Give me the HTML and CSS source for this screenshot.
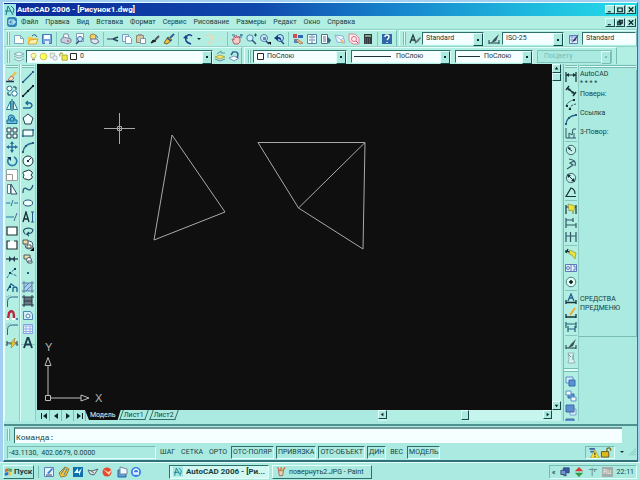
FILE: index.html
```html
<!DOCTYPE html>
<html lang="ru">
<head>
<meta charset="utf-8">
<title>AutoCAD 2006 - [Рисунок1.dwg]</title>
<link rel="stylesheet" href="styles.css">
</head>
<body>
<svg class="sprite" aria-hidden="true">
  <symbol id="app" viewBox="0 0 12 12"><path d="M0 0h12v12H0z" fill="#9fe6e4"/><path d="M2 11 4 2l5 9M1 7h6M7 2l3 3-1 4" fill="none" stroke="#167a84"/></symbol>
  <symbol id="doc" viewBox="0 0 12 12"><rect x="1" y="1" width="10" height="10" rx="3" fill="#2f83b8"/><path d="M3 4h5v4H3zM5 6h5" fill="none" stroke="#e4ffff"/></symbol>
  <symbol id="new" viewBox="0 0 12 12"><path d="M1.500 2.500h6l3 3v5h-9z" fill="#fff" stroke="#7da6c4"/><path d="M7.500 2.500v3h3" fill="none" stroke="#7da6c4"/></symbol>
  <symbol id="open" viewBox="0 0 12 12"><path d="M1 4h4l1 1h4v6H1z" fill="#f7c948"/><path d="m3 7 8-1-2 5H1z" fill="#fff1a8" stroke="#c48b26" stroke-width=".7"/><path d="M5 3q3-3 5 1" fill="none" stroke="#2c5a7a"/></symbol>
  <symbol id="save" viewBox="0 0 12 12"><path d="M1.500 1.500h9v9h-9z" fill="#7ba7de" stroke="#4b74b4"/><path d="M3 2h6v4H3z" fill="#f5ffff"/><path d="M4 8h4v3H4z" fill="#dceeff"/></symbol>
  <symbol id="print" viewBox="0 0 12 12"><path d="m3 5 1-4h4l1 4" fill="#fff" stroke="#7c8fac"/><path d="M1 6 4 4l7 2v3l-3 2-7-2z" fill="#c7cde0" stroke="#6b7493" stroke-width=".8"/><path d="M7 8h2" stroke="#c33"/></symbol>
  <symbol id="preview" viewBox="0 0 12 12"><path d="M2.500.500h7v8h-7z" fill="#fff" stroke="#839cbc"/><circle cx="6" cy="6" r="2.500" fill="#c7efff" stroke="#406aaa"/><path d="m5 8-3 3" stroke="#384c7a" stroke-width="1.500"/></symbol>
  <symbol id="publish" viewBox="0 0 12 12"><circle cx="5" cy="4" r="3" fill="#f4d16c" stroke="#a38142"/><path d="M3 6h6l2 3-4 2-4-2z" fill="#e3e6ef" stroke="#6e7591"/><path d="m8 2 2 3" stroke="#587bb4"/></symbol>
  <symbol id="cut" viewBox="0 0 12 12"><path d="M0 6h7" stroke="#577886" stroke-width="1.500"/><path d="m6 6 5-2M6 6l5 2" stroke="#27475e" stroke-width="1.500"/></symbol>
  <symbol id="copy" viewBox="0 0 12 12"><path d="M1.500 1.500h6v7h-6z" fill="#e9f5ff" stroke="#7b9cc4"/><path d="M4.500 3.500h4l2 2v5h-6z" fill="#fff" stroke="#7b9cc4"/></symbol>
  <symbol id="paste" viewBox="0 0 12 12"><path d="M1.500 2.500h7v7h-7z" fill="#d9c9a2" stroke="#928668"/><path d="M3 1h4v2H3z" fill="#99a"/><path d="M5.500 5.500h5v5h-5z" fill="#fff" stroke="#8494ae"/></symbol>
  <symbol id="brush" viewBox="0 0 12 12"><path d="m10 3-4 4" stroke="#556" stroke-width="2"/><path d="m2 10 2-3 3 1z" fill="#222" stroke="#222"/></symbol>
  <symbol id="brush2" viewBox="0 0 12 12"><path d="m11 1-4 4" stroke="#36609a" stroke-width="2"/><path d="m5 4 4 3-5 4-3-1z" fill="#f5bf36" stroke="#77621f"/><path d="m4 5 4 3" stroke="#1f59a1" stroke-width="1.500"/></symbol>
  <symbol id="undo" viewBox="0 0 12 12"><path d="M9 11Q2 9 4 4q3-4 6-1" fill="none" stroke="#17418e" stroke-width="1.600"/><path d="m1 5 3-3 2 4z" fill="#17418e"/></symbol>
  <symbol id="redo" viewBox="0 0 12 12"><path d="M3 11q7-2 5-7Q5 0 2 3" fill="none" stroke="#e3d9b9" stroke-width="1.600"/><path d="M11 5 8 2 6 6z" fill="#e8deb9"/></symbol>
  <symbol id="pan" viewBox="0 0 12 12"><path d="M3 11 1 6l2 1V3l2 2V2l2 3 1-2 1 3v3l-2 2z" fill="#f8c9c4" stroke="#ad6574"/><path d="M9 2h3M10 1v4M1 2h3" stroke="#2a6b9b"/></symbol>
  <symbol id="zoom" viewBox="0 0 12 12"><circle cx="5" cy="5" r="3.200" fill="#c4f0ff" stroke="#537ba7"/><path d="m7 7 4 4" stroke="#244c75" stroke-width="1.500"/><path d="M9 2h3M10.500.500v3" stroke="#244c75"/></symbol>
  <symbol id="zoomw" viewBox="0 0 12 12"><circle cx="5" cy="5" r="3.500" fill="#ccefff" stroke="#537ba7"/><path d="m7 8 3 3" stroke="#244c75" stroke-width="1.500"/><path d="M4 4h3v3H4z" fill="#6788ad"/><path d="M9 9h3v3z" fill="#000"/></symbol>
  <symbol id="zoomp" viewBox="0 0 12 12"><circle cx="7" cy="5" r="3.500" fill="#b9e4ff" stroke="#2f60a2"/><path d="m8 8 3 3" stroke="#244c75" stroke-width="1.500"/><path d="m1 5 4-3v2q4 0 3 4-1-2-3-2v2z" fill="#184080"/></symbol>
  <symbol id="props" viewBox="0 0 12 12"><path d="M1 1h4v4H1z" fill="#cf4e4f"/><path d="M6 2h5v3H6z" fill="#2f69b7"/><path d="M2 6h4v4H2z" fill="#5b82bd"/><path d="m5 6 6 4-3 1-4-4z" fill="#f0bd79" stroke="#9d6654" stroke-width=".7"/></symbol>
  <symbol id="dc" viewBox="0 0 12 12"><path d="M1.500 1.500h9v9h-9zM6 1v10" fill="#f6ffff" stroke="#5a81a7"/><path d="M3 4h2M3 7h2M7 4h2M7 7h2" stroke="#517297"/></symbol>
  <symbol id="palette" viewBox="0 0 12 12"><path d="M1.500 1.500h6v9h-6z" fill="#fff" stroke="#557291"/><path d="M3 4h3M3 6h3M3 8h3" stroke="#4a79a5"/><path d="m7 3 4 4-2 4-2-4z" fill="#37658a"/></symbol>
  <symbol id="sheet" viewBox="0 0 12 12"><path d="m1 2 8 1 2 7-8-1z" fill="#eef6ff" stroke="#8db4d2"/><path d="m1 2 6 5 3-3" fill="none" stroke="#a8bdd8"/><path d="m7 7 3 3" stroke="#edb878" stroke-width="2"/></symbol>
  <symbol id="markup" viewBox="0 0 12 12"><path d="M1 1h6l4 4v6H5L1 8z" fill="#ffe9ee" stroke="#d08c9c"/><circle cx="6" cy="6" r="2.500" fill="none" stroke="#dd6e84"/><path d="m8 8 2 2" stroke="#c38"/></symbol>
  <symbol id="calc" viewBox="0 0 12 12"><path d="M2 1h8v10H2z" fill="#343940"/><path d="M3 2h6v2H3z" fill="#79a486"/><path d="M3 6h6M3 8h6M3 10h6" stroke="#a46b6d" stroke-dasharray="1 1"/></symbol>
  <symbol id="help" viewBox="0 0 12 12"><path d="M1 1h10v10H1z" fill="#2f67a9"/><path d="M4 4q0-2 2-2t2 2q0 1-2 3M6 9v1" fill="none" stroke="#fff" stroke-width="1.400"/></symbol>
  <symbol id="tstyle" viewBox="0 0 12 12"><path d="m1 10 3-8 3 8M2 7h4" fill="none" stroke="#233c45" stroke-width="1.300"/><path d="m11 4-4 4-2 3 4-2 3-4z" fill="#68777a"/></symbol>
  <symbol id="dstyle" viewBox="0 0 12 12"><path d="M1 7v4M11 7v4M1 10h10" stroke="#233c45"/><path d="m11 1-5 5-3 4 5-2z" fill="#394f56"/></symbol>
  <symbol id="tabst" viewBox="0 0 12 12"><path d="M1.500 2.500h8v8h-8z" fill="#eaf2ff" stroke="#6176c2"/><path d="M2 4h7M4 3v7M2 7h7" stroke="#879be0"/><path d="m11 1-5 5-2 3 3-1z" fill="#2d355a"/></symbol>
  <symbol id="layers" viewBox="0 0 12 12"><path d="m1 4 5-2 5 2-5 2zM1 6l5 2 5-2M1 9l5 2 5-2" fill="#eaffff" stroke="#7e9dac" stroke-width=".8"/></symbol>
  <symbol id="layprev" viewBox="0 0 12 12"><path d="m1 7 5-2 5 2-5 2z" fill="#f4e45d" stroke="#9b9443" stroke-width=".7"/><path d="m1 9 5 2 5-2" fill="none" stroke="#638ca3"/><path d="m3 4 4-3v2h4" fill="none" stroke="#609a8f"/></symbol>
  <symbol id="layback" viewBox="0 0 12 12"><path d="m1 8 5-2 5 2-5 3z" fill="#f6ffff" stroke="#7d9aba"/><path d="M9 8q3-7-4-6L3 5" fill="none" stroke="#36609a" stroke-width="1.500"/></symbol>
  <symbol id="bulb" viewBox="0 0 12 12"><path d="M4 8Q1 4 4 2h4q3 2 0 6z" fill="#fcffac" stroke="#bcb74e"/><path d="M4 10h4" stroke="#8c8f70" stroke-width="2"/></symbol>
  <symbol id="sun" viewBox="0 0 12 12"><circle cx="6" cy="6" r="4.500" fill="#ffff55" stroke="#b9b944"/></symbol>
  <symbol id="vp" viewBox="0 0 12 12"><path d="M1.500 1.500h6v6h-6z" fill="#eaf1df" stroke="#abb3a4"/><circle cx="8" cy="8" r="3" fill="#eef" stroke="#a4abb3"/></symbol>
  <symbol id="lock" viewBox="0 0 12 12"><path d="M1 6V3q2-3 4 0" fill="none" stroke="#a6a12c" stroke-width="1.500"/><path d="M4 4h7v7H4z" fill="#eeee4a" stroke="#99962c"/></symbol>
  <symbol id="swatch" viewBox="0 0 12 12"><path d="M2 2h8v8H2z" fill="#fff" stroke="#222" stroke-width="1.300"/></symbol>

  <symbol id="erase" viewBox="0 0 12 12"><path d="m10 1-5 6" stroke="#e8c35c" stroke-width="2.500"/><path d="m5 5 3 2-3 3-3-1z" fill="#ffdfc9" stroke="#a84a3c" stroke-width=".7"/><path d="M0 10.500h8" stroke="#16395b" stroke-width="1.500"/></symbol>
  <symbol id="dup" viewBox="0 0 12 12"><g fill="#f4ffff" stroke="#2a6c9c"><circle cx="3.500" cy="3.500" r="2.500"/><circle cx="8.500" cy="8.500" r="2.700"/></g><path d="M7 2h3v3M2 7v3h3" fill="none" stroke="#17395a"/></symbol>
  <symbol id="mirror" viewBox="0 0 12 12"><path d="M4.500 2v8.500H.500zM7.500 2v8.500h4z" fill="#eaffff" stroke="#2a7799"/><path d="M6 0v12" stroke="#0d5577"/></symbol>
  <symbol id="offset" viewBox="0 0 12 12"><path d="M1 10.500h10V7H9q0-5-4-5T3 7H1zM4 8h4q0-4-2-4T4 8" fill="#71bddc" stroke="#146b9b"/></symbol>
  <symbol id="array" viewBox="0 0 12 12"><path d="M1 1h4v4H1zM7 1h4v4H7zM1 7h4v4H1zM7 7h4v4H7z" fill="#f4ffff" stroke="#263b4d"/></symbol>
  <symbol id="move" viewBox="0 0 12 12"><path d="M6 2v8M2 6h8" stroke="#266d9d" stroke-width="1.400"/><path d="m6 0 2 3H4zM6 12 4 9h4zM0 6l3-2v4zM12 6 9 8V4z" fill="#266d9d"/></symbol>
  <symbol id="rotate" viewBox="0 0 12 12"><path d="M3 3a4.500 4.500 0 1 0 5-1" fill="none" stroke="#2a77a8" stroke-width="1.600"/><path d="M1 2h4v4z" fill="#17395a"/></symbol>
  <symbol id="scale" viewBox="0 0 12 12"><path d="M.500.500h11v11H.500z" fill="#fff" stroke="#8fa8a8"/><path d="M.500 5.500h6v6h-6z" fill="#fff" stroke="#a19696"/></symbol>
  <symbol id="stretch" viewBox="0 0 12 12"><path d="M1.500 1.500h3v9h-3z" fill="#fff" stroke="#678"/><path d="m5 1 6 10H5z" fill="#effcfc" stroke="#355266"/></symbol>
  <symbol id="trim" viewBox="0 0 12 12"><path d="M0 6h4M8 6h4" stroke="#2a77a8"/><path d="m5 9 2-6" stroke="#456c8e"/><path d="M4 6h4" stroke="#80bcc4" stroke-dasharray="1 1"/></symbol>
  <symbol id="extend" viewBox="0 0 12 12"><path d="M0 6h8" stroke="#2a77a8"/><path d="m8 10 3-8" stroke="#456c8e"/></symbol>
  <symbol id="box" viewBox="0 0 12 12"><path d="M1 2h10v8H1z" fill="#fff" stroke="#1d3037" stroke-width="1.200"/></symbol>
  <symbol id="break" viewBox="0 0 12 12"><path d="M4 2H1v8h10V2H8" fill="#fff" stroke="#1d3037" stroke-width="1.200"/></symbol>
  <symbol id="join" viewBox="0 0 12 12"><path d="M0 6h12" stroke="#243f4d" stroke-width="1.300"/><path d="m3 3 3 3-3 3zM9 3 6 6l3 3z" fill="#243f4d"/></symbol>
  <symbol id="chamf" viewBox="0 0 12 12"><path d="m1 11 3-5 5-4M4 6l7 3" fill="none" stroke="#2a77a8" stroke-dasharray="3 1"/><path d="M3 5h2v2H3zM8 1h2v2H8z" fill="#17395a"/></symbol>
  <symbol id="chamf2" viewBox="0 0 12 12"><path d="m1 10 4-7 3 2M7 11V7q2-2 4 0v4" fill="none" stroke="#17648f" stroke-width="1.300"/><path d="M3 5h2v2H3z" fill="#17395a"/></symbol>
  <symbol id="fillet" viewBox="0 0 12 12"><path d="M1.500 12V7q0-5 5-5H12" fill="none" stroke="#23698e"/><path d="M1 6V1h5" fill="none" stroke="#7aa9b0" stroke-dasharray="1 1"/></symbol>
  <symbol id="magnet" viewBox="0 0 12 12"><path d="m2 10 1-6q2-3 4-1 1 1 1 7" fill="none" stroke="#ba263c" stroke-width="2.400"/><path d="M0 10h3M6 10h3" stroke="#fff" stroke-width="2"/><path d="M10 9h2v2h-2z" fill="#4a85b0"/></symbol>
  <symbol id="explode" viewBox="0 0 12 12"><path d="M1 4v5M11 4v5M1 6h10" stroke="#243f4d"/><path d="m5 11 1-5-2 1 5-6-1 5 3-1z" fill="#efc73e" stroke="#8e6f1c" stroke-width=".5"/></symbol>
  <symbol id="line" viewBox="0 0 12 12"><path d="m1 11 9-9" stroke="#23638d" stroke-width="1.300"/><path d="M0 10h2v2H0zM10 0h2v2h-2z" fill="#23638d"/></symbol>
  <symbol id="xline" viewBox="0 0 12 12"><path d="m1 11 10-10" stroke="#12252e" stroke-width="1.200"/><path d="M0 10h2v2H0zM10 0h2v2h-2zM5 5h2v2H5z" fill="#12252e"/></symbol>
  <symbol id="pline" viewBox="0 0 12 12"><path d="M1 9h7q4-3 0-5H4M6 2 4 4l2 2" fill="none" stroke="#1b6c98" stroke-width="1.400"/></symbol>
  <symbol id="poly" viewBox="0 0 12 12"><path d="m6 1 5 4-2 6H3L1 5z" fill="#efffff" stroke="#284050"/></symbol>
  <symbol id="rect" viewBox="0 0 12 12"><path d="M1 3h10v6H1z" fill="#efffff" stroke="#1f4152"/><path d="M0 8h2v2H0zM10 2h2v2h-2z" fill="#267bb0"/></symbol>
  <symbol id="arc" viewBox="0 0 12 12"><path d="M1 11q1-8 10-9" fill="none" stroke="#276992" stroke-width="1.300"/><path d="M0 10h2v2H0zM3 4h2v2H3zM10 1h2v2h-2z" fill="#285d7f"/></symbol>
  <symbol id="circle" viewBox="0 0 12 12"><circle cx="6" cy="6" r="5" fill="#efffff" stroke="#20313b"/><path d="m6 6 3-3" stroke="#20313b"/><path d="M5 5h2v2H5z" fill="#20313b"/></symbol>
  <symbol id="cloud" viewBox="0 0 12 12"><path d="M4 2q3-2 5 0 3 2 0 4 3 2 0 4-3 2-5 0-4 0-2-4-3-3 2-4z" fill="#f4ffff" stroke="#20313b"/></symbol>
  <symbol id="spline" viewBox="0 0 12 12"><path d="M1 10Q1 3 5 6t6-4" fill="none" stroke="#265779" stroke-width="1.200"/></symbol>
  <symbol id="ellipse" viewBox="0 0 12 12"><ellipse cx="6" cy="6" rx="4.500" ry="3" fill="#efffff" stroke="#265779"/></symbol>
  <symbol id="earc" viewBox="0 0 12 12"><path d="M3 9Q-1 4 6 3q8 1 3 5L5 9l2-2M5 9l2 2" fill="none" stroke="#20516c" stroke-width="1.200"/></symbol>
  <symbol id="ai" viewBox="0 0 12 12"><path d="M1 11 4 1l3 10M2 8h4" fill="none" stroke="#172c35" stroke-width="1.300"/><path d="M9 1h3M9 11h3M10.500 1v10" stroke="#235c88"/></symbol>
  <symbol id="block" viewBox="0 0 12 12"><circle cx="7" cy="6" r="4" fill="#effaff" stroke="#466272"/><path d="M1 1h5v4H1z" fill="#f4dda0" stroke="#4b5b62"/><path d="M5 6h4v3H5z" fill="#ffd" stroke="#4b5b62"/><path d="M12 8v4H8z"/></symbol>
  <symbol id="block2" viewBox="0 0 12 12"><path d="M2 2h6v4H2z" fill="#f4dda0" stroke="#4b5b62"/><circle cx="7" cy="7" r="2.500" fill="#effaff" stroke="#466272"/><path d="M6 8h4v2H6z" fill="#fff" stroke="#4b5b62"/></symbol>
  <symbol id="point" viewBox="0 0 12 12"><path d="M5 5h2v2H5z" fill="#245f87"/></symbol>
  <symbol id="hatch" viewBox="0 0 12 12"><path d="M2 2h8v8H2z" fill="#a9cdec"/><path d="M0 2h12M2 0v12M10 0v12M0 10h12M2 7l5-5M4 10l6-6" fill="none" stroke="#5481a4"/></symbol>
  <symbol id="grad" viewBox="0 0 12 12"><path d="M2 2h8v8H2z" fill="#6b7680"/><path d="M0 2h12M2 0v12M10 0v12M0 10h12M2 6h8" fill="none" stroke="#263944"/></symbol>
  <symbol id="region" viewBox="0 0 12 12"><path d="M1.500 2.500h7l2 3v5h-9z" fill="#d3efff" stroke="#4c86ae"/><circle cx="6" cy="7" r="2" fill="#fff" stroke="#4c86ae"/></symbol>
  <symbol id="table" viewBox="0 0 12 12"><path d="M1.500 1.500h9v9h-9z" fill="#edf2ff" stroke="#7f9fdf"/><path d="M1 3h10M1 6h10M1 8.500h10M4 3v8M8 3v8" stroke="#94afe8"/></symbol>
  <symbol id="bigA" viewBox="0 0 12 12"><path d="M2 11 5.500 1h1L10 11M3 7.500h6" fill="none" stroke="#1d3d50" stroke-width="1.900"/></symbol>

  <symbol id="dlin" viewBox="0 0 12 12"><path d="M1 1v10M11 1v10M1 4h10" fill="none" stroke="#17333b" stroke-width="1.200"/><path d="m1 4 3-2v4zM11 4 8 2v4z" fill="#17333b"/></symbol>
  <symbol id="dali" viewBox="0 0 12 12"><path d="m2 3 8 6M1 5l3-4M8 11l3-4" stroke="#17333b" stroke-width="1.400"/><path d="m2 3 4 1-2 2zM10 9 6 8l2-2z" fill="#17333b"/></symbol>
  <symbol id="darc" viewBox="0 0 12 12"><path d="M1 7q2-5 8-6M4 11q1-5 7-6" fill="none" stroke="#315766" stroke-dasharray="3 1"/><path d="M1 6h2v2H1zM8 0h2v2H8zM4 9h2v2H4z" fill="#17333b"/></symbol>
  <symbol id="dord" viewBox="0 0 12 12"><path d="M1 1v10h10M4 11V6l3 2 1-6h3M9 6v5" fill="none" stroke="#315766"/></symbol>
  <symbol id="drad" viewBox="0 0 12 12"><circle cx="6" cy="6" r="4.700" fill="#c3f0e9" stroke="#426872"/><path d="m3 4 4 3" stroke="#17333b"/><path d="m3 3 3 1-2 2z" fill="#17333b"/></symbol>
  <symbol id="djog" viewBox="0 0 12 12"><path d="M4 1q8 1 6 7M9 3 5 5l3 2-6 4" fill="none" stroke="#315766" stroke-width="1.200"/></symbol>
  <symbol id="ddia" viewBox="0 0 12 12"><circle cx="6" cy="6" r="4.700" fill="#c3f0e9" stroke="#426872"/><path d="m3 3 6 6" stroke="#17333b"/><path d="m2 2 4 1-3 3zM10 10 6 9l3-3z" fill="#17333b"/></symbol>
  <symbol id="dang" viewBox="0 0 12 12"><path d="M11 10.500H1L6 2q4 1 4 6" fill="none" stroke="#17333b" stroke-width="1.200"/></symbol>
  <symbol id="qdim" viewBox="0 0 12 12"><path d="M1 2v9M11 2v9M1 4h10" stroke="#17333b" stroke-width="1.200"/><path d="m3 1 7 2-2 8-1-4-3 1z" fill="#efe436" stroke="#79853b" stroke-width=".6"/></symbol>
  <symbol id="dbase" viewBox="0 0 12 12"><path d="M1 1v10M8 1v4M11 6v5M1 3h7M1 8h10" stroke="#315766" stroke-width="1.200"/></symbol>
  <symbol id="dcont" viewBox="0 0 12 12"><path d="M1 1v10M5.500 1v10M11 1v10M1 5h10" stroke="#315766" stroke-width="1.200"/></symbol>
  <symbol id="lead" viewBox="0 0 12 12"><path d="m0 3 5 1M1 5l2-4" stroke="#17333b" stroke-width="1.500"/><path d="m5 2 6 3-1 6-3-4-3-1z" fill="#efe436" stroke="#79853b" stroke-width=".6"/></symbol>
  <symbol id="tol" viewBox="0 0 12 12"><path d="M.500 2.500h11v7H.500zM6 2v8" fill="#e4f2ff" stroke="#5c79b8"/><circle cx="3" cy="6" r="1.500" fill="none" stroke="#5c79b8"/><path d="M8 4h2v4H8" fill="none" stroke="#5c79b8"/></symbol>
  <symbol id="cmark" viewBox="0 0 12 12"><circle cx="6" cy="6" r="4.800" fill="#dafff7" stroke="#527d7e"/><path d="M6 4v4M4 6h4" stroke="#111" stroke-width="1.500"/></symbol>
  <symbol id="dimA" viewBox="0 0 12 12"><path d="M1 7v4M11 7v4M1 9.500h10" stroke="#17333b" stroke-width="1.300"/><path d="m3 8 3-7 3 7M4 5h4" fill="none" stroke="#24618f" stroke-width="1.300"/></symbol>
  <symbol id="dimE" viewBox="0 0 12 12"><path d="M1 7v4M11 7v4M1 10h10" stroke="#17333b" stroke-width="1.300"/><path d="m10 1-5 7" stroke="#edab37" stroke-width="2"/></symbol>
  <symbol id="dimU" viewBox="0 0 12 12"><path d="M1 1v6M11 1v6M1 3h10M3 5v6M10 5v6M3 8h7" stroke="#236079" stroke-width="1.200"/></symbol>
  <symbol id="fade" viewBox="0 0 12 12"><path d="M3 1h6L8 6l2 5H3l1-5z" fill="#d8f2ef" stroke="#96b3b8"/><path d="m3 2 3 3M8 3v5" stroke="#6f9aa5"/></symbol>
  <symbol id="ord1" viewBox="0 0 12 12"><path d="M1 1h7v6H1z" fill="#d9edff" stroke="#5c8fc4"/><path d="M4 4h6v6H4z" fill="#5a94d0" stroke="#386aa8"/></symbol>
  <symbol id="ord2" viewBox="0 0 12 12"><path d="M3 4h6v4H3z" fill="#5a94d0" stroke="#386aa8"/><path d="M1 1h5v4H1zM6 7h5v4H6z" fill="#f3faff" stroke="#5c8fc4"/></symbol>
  <symbol id="ord3" viewBox="0 0 12 12"><path d="M5 5h6v6H5z" fill="#d9edff" stroke="#7da4cf"/><path d="M1 1h8v7H1z" fill="#5e8fd0" stroke="#3f6aa8"/></symbol>

  <symbol id="flag" viewBox="0 0 12 12"><path d="m2 2 4-1v4L1 6z" fill="#e35b38"/><path d="m6 1 5 1-1 4-4-1z" fill="#59aa48"/><path d="m1 7 5-1v4l-5 1z" fill="#356bd0"/><path d="m6 6 4 1-1 4-3-1z" fill="#f1c93a"/></symbol>
  <symbol id="ql1" viewBox="0 0 12 12"><path d="M1.500 1.500h9v9h-9z" fill="#e3f3ff" stroke="#5b83b7"/><path d="m4 7 5-5 1 1-4 5z" fill="#3f7ec3"/><path d="M3 9h6" stroke="#446"/></symbol>
  <symbol id="ql2" viewBox="0 0 12 12"><path d="m7 1 4 2-3 7-5 1-2-4z" fill="#f2c641" stroke="#a17a2c"/><path d="m7 2-4 6M9 3 6 9" stroke="#3c87a1"/></symbol>
  <symbol id="ql3" viewBox="0 0 12 12"><path d="M1 1h10v10H1z" fill="#126fae"/><path d="m2 7 4-5v4l4-4-3 8V7z" fill="#e3ffff"/></symbol>
  <symbol id="ql4" viewBox="0 0 12 12"><path d="m1 4 4 1 6-2-4 6-4-1z" fill="#d8e6e7" stroke="#526d75"/><path d="m4 5 3 2" stroke="#a55"/></symbol>
  <symbol id="ql5" viewBox="0 0 12 12"><circle cx="6" cy="6" r="4.500" fill="#e74830"/><path d="m2 3 5 3 4-2-3 5z" fill="#ffd9ae"/></symbol>
  <symbol id="ql6" viewBox="0 0 12 12"><path d="M2 4h8v7H2z" fill="#5ba0db" stroke="#28659b"/><path d="m4 1 7 2v5H4z" fill="#eefaff" stroke="#789"/></symbol>
  <symbol id="ql7" viewBox="0 0 12 12"><circle cx="6" cy="6" r="5" fill="#377de2"/><path d="M9 8H4q-2-4 2-5 4 1 2 4H4" fill="none" stroke="#e8f5ff" stroke-width="1.300"/></symbol>
  <symbol id="paint" viewBox="0 0 12 12"><path d="M3 5h6l-1 6H4z" fill="#edd1a9" stroke="#8f6757"/><path d="M4 5 2 1M6 5V1M8 5l3-4" stroke="#d65d3b" stroke-width="1.400"/><path d="M7 5 9 1" stroke="#dfc53e"/></symbol>
  <symbol id="net" viewBox="0 0 12 12"><path d="M4 1h7v6H4z" fill="#3b5ba8" stroke="#29446f"/><path d="M1 4h6v5H1z" fill="#7394d6" stroke="#37456b"/><path d="M4 9h4v2H4z" fill="#567"/></symbol>
  <symbol id="updown" viewBox="0 0 12 12"><path d="m6 0 5 5H1z" fill="#d63c31"/><path d="m6 12 5-5H1z" fill="#2c9b42"/></symbol>
  <symbol id="plug" viewBox="0 0 12 12"><path d="M1 3h10M5 1v10M8 3v3" stroke="#699398" stroke-width="1.200"/></symbol>
  <symbol id="warn" viewBox="0 0 12 12"><path d="M1 2h6M2 5h5" stroke="#3d65a8" stroke-width="2"/><path d="m7 3 5 9H2z" fill="#f6df40" stroke="#9b8a2c" stroke-width=".6"/><path d="M7 6v3M7 10v1" stroke="#111"/></symbol>
  <symbol id="tlock" viewBox="0 0 12 12"><path d="M7 5V2q2-2 4 0v2" fill="none" stroke="#76661b" stroke-width="1.400"/><path d="M1 5h8v6H1z" fill="#dfb91c" stroke="#60531a"/></symbol>
</svg>

<div class="window">
  <header class="titlebar">
    <svg class="icon"><use href="#app"/></svg>
    <h1 class="title">AutoCAD 2006 - [Рисунок1.dwg]</h1>
    <div class="winbtns">
      <button aria-label="Свернуть"><svg viewBox="0 0 8 8"><path d="M1 7h4"/></svg></button><button aria-label="Развернуть"><svg viewBox="0 0 8 8"><path d="M1 2h6v5H1z"/></svg></button><button aria-label="Закрыть"><svg viewBox="0 0 8 8"><path d="m1 1 6 6M7 1 1 7"/></svg></button>
    </div>
  </header>

  <nav class="menubar">
    <svg class="icon"><use href="#doc"/></svg>
    <div class="menus">
      <button>Файл</button><button>Правка</button><button>Вид</button><button>Вставка</button><button>Формат</button><button>Сервис</button><button>Рисование</button><button>Размеры</button><button>Редакт</button><button>Окно</button><button>Справка</button>
    </div>
    <div class="winbtns">
      <button aria-label="Свернуть рисунок"><svg viewBox="0 0 8 8"><path d="M1 7h4"/></svg></button><button aria-label="Восстановить рисунок"><svg viewBox="0 0 8 8"><path d="M3 1h4v4H3zM1 3h4v4H1z"/></svg></button><button aria-label="Закрыть рисунок"><svg viewBox="0 0 8 8"><path d="m1 1 6 6M7 1 1 7"/></svg></button>
    </div>
  </nav>

  <div class="toolrow">
    <div class="toolbar">
      <i class="grip"></i>
      <button class="tool" aria-label="Создать"><svg><use href="#new"/></svg></button>
      <button class="tool" aria-label="Открыть"><svg><use href="#open"/></svg></button>
      <button class="tool" aria-label="Сохранить"><svg><use href="#save"/></svg></button>
      <i class="sep"></i>
      <button class="tool" aria-label="Печать"><svg><use href="#print"/></svg></button>
      <button class="tool" aria-label="Просмотр"><svg><use href="#preview"/></svg></button>
      <button class="tool" aria-label="Публикация"><svg><use href="#publish"/></svg></button>
      <i class="sep"></i>
      <button class="tool" aria-label="Вырезать"><svg><use href="#cut"/></svg></button>
      <button class="tool" aria-label="Копировать"><svg><use href="#copy"/></svg></button>
      <button class="tool" aria-label="Вставить"><svg><use href="#paste"/></svg></button>
      <button class="tool" aria-label="Копирование свойств"><svg><use href="#brush"/></svg></button>
      <button class="tool" aria-label="Редактор блоков"><svg><use href="#brush2"/></svg></button>
      <i class="sep"></i>
      <button class="tool" aria-label="Отменить"><svg><use href="#undo"/></svg></button>
      <button class="more" aria-label="Список отмены"></button>
      <button class="tool" aria-label="Повторить"><svg><use href="#redo"/></svg></button>
      <button class="more pale" aria-label="Список повтора"></button>
      <i class="sep"></i>
      <button class="tool" aria-label="Панорамирование"><svg><use href="#pan"/></svg></button>
      <button class="tool" aria-label="Зумирование"><svg><use href="#zoom"/></svg></button>
      <button class="tool" aria-label="Рамка"><svg><use href="#zoomw"/></svg></button>
      <button class="tool" aria-label="Предыдущий вид"><svg><use href="#zoomp"/></svg></button>
      <i class="sep"></i>
      <button class="tool" aria-label="Свойства"><svg><use href="#props"/></svg></button>
      <button class="tool" aria-label="Центр управления"><svg><use href="#dc"/></svg></button>
      <button class="tool" aria-label="Палитры"><svg><use href="#palette"/></svg></button>
      <button class="tool" aria-label="Подшивки"><svg><use href="#sheet"/></svg></button>
      <button class="tool" aria-label="Пометки"><svg><use href="#markup"/></svg></button>
      <button class="tool" aria-label="Калькулятор"><svg><use href="#calc"/></svg></button>
      <i class="sep"></i>
      <button class="tool" aria-label="Справка"><svg><use href="#help"/></svg></button>
    </div>
    <div class="toolbar grow">
      <i class="grip"></i>
      <button class="tool" aria-label="Текстовые стили"><svg><use href="#tstyle"/></svg></button>
      <div class="combo style"><select aria-label="Текстовый стиль"><option>Standard</option></select></div>
      <button class="tool wide" aria-label="Размерные стили"><svg><use href="#dstyle"/></svg></button>
      <div class="combo style"><select aria-label="Размерный стиль"><option>ISO-25</option></select></div>
      <button class="tool wide" aria-label="Стили таблиц"><svg><use href="#tabst"/></svg></button>
      <div class="combo rest"><select aria-label="Стиль таблиц"><option>Standard</option></select></div>
    </div>
  </div>

  <div class="toolrow">
    <div class="toolbar">
      <i class="grip"></i>
      <button class="tool" aria-label="Диспетчер слоев"><svg><use href="#layers"/></svg></button>
      <div class="combo layer">
        <select aria-label="Слой"><option>0</option></select>
        <span class="deco"><svg><use href="#bulb"/></svg><svg><use href="#sun"/></svg><svg><use href="#vp"/></svg><svg><use href="#lock"/></svg><svg><use href="#swatch"/></svg></span>
      </div>
      <button class="tool" aria-label="Сделать слой текущим"><svg><use href="#layprev"/></svg></button>
      <button class="tool" aria-label="Предыдущее состояние слоев"><svg><use href="#layback"/></svg></button>
    </div>
    <div class="toolbar props">
      <i class="grip"></i>
      <div class="combo color"><select aria-label="Цвет"><option>ПоСлою</option></select><span class="deco"><svg><use href="#swatch"/></svg></span></div>
      <div class="combo ltype"><select aria-label="Тип линии"><option>ПоСлою</option></select><span class="deco stroke"></span></div>
      <div class="combo weight"><select aria-label="Вес линии"><option>ПоСлою</option></select><span class="deco stroke"></span></div>
      <div class="combo plot off"><select aria-label="Стиль печати" disabled><option>ПоЦвету</option></select></div>
    </div>
  </div>

  <main class="work">
    <div class="column">
      <i class="hgrip"></i>
      <div class="stack">
        <button class="tool" aria-label="Стереть"><svg><use href="#erase"/></svg></button>
        <button class="tool" aria-label="Копировать объекты"><svg><use href="#dup"/></svg></button>
        <button class="tool" aria-label="Зеркало"><svg><use href="#mirror"/></svg></button>
        <button class="tool" aria-label="Подобие"><svg><use href="#offset"/></svg></button>
        <button class="tool" aria-label="Массив"><svg><use href="#array"/></svg></button>
        <button class="tool" aria-label="Перенести"><svg><use href="#move"/></svg></button>
        <button class="tool" aria-label="Повернуть"><svg><use href="#rotate"/></svg></button>
        <button class="tool" aria-label="Масштаб"><svg><use href="#scale"/></svg></button>
        <button class="tool" aria-label="Растянуть"><svg><use href="#stretch"/></svg></button>
        <button class="tool" aria-label="Обрезать"><svg><use href="#trim"/></svg></button>
        <button class="tool" aria-label="Удлинить"><svg><use href="#extend"/></svg></button>
        <button class="tool" aria-label="Разорвать в точке"><svg><use href="#box"/></svg></button>
        <button class="tool" aria-label="Разорвать"><svg><use href="#break"/></svg></button>
        <button class="tool" aria-label="Соединить"><svg><use href="#join"/></svg></button>
        <button class="tool" aria-label="Правка полилинии"><svg><use href="#chamf"/></svg></button>
        <button class="tool" aria-label="Правка сплайна"><svg><use href="#chamf2"/></svg></button>
        <button class="tool" aria-label="Фаска"><svg><use href="#fillet"/></svg></button>
        <button class="tool" aria-label="Привязка"><svg><use href="#magnet"/></svg></button>
        <button class="tool" aria-label="Сопряжение"><svg><use href="#fillet"/></svg></button>
        <button class="tool" aria-label="Расчленить"><svg><use href="#explode"/></svg></button>
      </div>
    </div>
    <div class="column">
      <i class="hgrip"></i>
      <div class="stack">
        <button class="tool" aria-label="Отрезок"><svg><use href="#line"/></svg></button>
        <button class="tool" aria-label="Прямая"><svg><use href="#xline"/></svg></button>
        <button class="tool" aria-label="Полилиния"><svg><use href="#pline"/></svg></button>
        <button class="tool" aria-label="Многоугольник"><svg><use href="#poly"/></svg></button>
        <button class="tool" aria-label="Прямоугольник"><svg><use href="#rect"/></svg></button>
        <button class="tool" aria-label="Дуга"><svg><use href="#arc"/></svg></button>
        <button class="tool" aria-label="Круг"><svg><use href="#circle"/></svg></button>
        <button class="tool" aria-label="Облако"><svg><use href="#cloud"/></svg></button>
        <button class="tool" aria-label="Сплайн"><svg><use href="#spline"/></svg></button>
        <button class="tool" aria-label="Эллипс"><svg><use href="#ellipse"/></svg></button>
        <button class="tool" aria-label="Текст"><svg><use href="#ai"/></svg></button>
        <button class="tool" aria-label="Эллиптическая дуга"><svg><use href="#earc"/></svg></button>
        <button class="tool" aria-label="Вставить блок"><svg><use href="#block"/></svg></button>
        <button class="tool" aria-label="Создать блок"><svg><use href="#block2"/></svg></button>
        <button class="tool" aria-label="Точка"><svg><use href="#point"/></svg></button>
        <button class="tool" aria-label="Штриховка"><svg><use href="#hatch"/></svg></button>
        <button class="tool" aria-label="Градиент"><svg><use href="#grad"/></svg></button>
        <button class="tool" aria-label="Область"><svg><use href="#region"/></svg></button>
        <button class="tool" aria-label="Таблица"><svg><use href="#table"/></svg></button>
        <button class="tool" aria-label="Многострочный текст"><svg><use href="#bigA"/></svg></button>
      </div>
    </div>

    <section class="drawing">
      <svg class="model" role="img" aria-label="Рисунок">
        <path class="cross" d="M67 64.500h31M82.500 49v31M80.500 62.500h4v4h-4z"/>
        <path class="shape" d="m135 71 53 77-71 28zM221 78.500h107L261.500 144zM261.500 144 326 185l2-106.500"/>
        <path class="ucs" d="M8.500 331.500h5v5h-5zM11 331v-30M11 293.500l-3 8h6zM14 334h30M52 334l-8-3v6z"/>
        <text class="axis" x="8" y="287">Y</text>
        <text class="axis" x="58" y="338">X</text>
      </svg>
      <div class="vscroll">
        <button aria-label="Вверх"><svg viewBox="0 0 8 8"><path d="m4 2 2 3H2z"/></svg></button>
        <i class="thumb"></i>
        <span class="track"></span>
        <button aria-label="Вниз"><svg viewBox="0 0 8 8"><path d="M4 6 2 3h4z"/></svg></button>
      </div>
      <div class="tabs">
        <div class="tabnav">
          <button aria-label="Первый"><svg viewBox="0 0 8 8"><path d="M1 1h1v6H1zM7 1v6L3 4z"/></svg></button><button aria-label="Назад"><svg viewBox="0 0 8 8"><path d="M6 1v6L2 4z"/></svg></button><button aria-label="Вперед"><svg viewBox="0 0 8 8"><path d="M2 1v6l4-3z"/></svg></button><button aria-label="Последний"><svg viewBox="0 0 8 8"><path d="M6 1h1v6H6zM1 1v6l4-3z"/></svg></button>
        </div>
        <button class="tab current">Модель</button>
        <button class="tab">Лист1</button>
        <button class="tab">Лист2</button>
        <div class="hscroll">
          <button aria-label="Влево"><svg viewBox="0 0 8 8"><path d="M2 4l3-2v4z"/></svg></button>
          <span class="before"></span><i class="thumb"></i><span class="after"></span>
          <button aria-label="Вправо"><svg viewBox="0 0 8 8"><path d="M6 4 3 6V2z"/></svg></button>
        </div>
      </div>
    </section>

    <div class="column dims">
      <i class="hgrip"></i>
      <button class="tool" aria-label="Линейный"><svg><use href="#dlin"/></svg></button>
      <button class="tool" aria-label="Параллельный"><svg><use href="#dali"/></svg></button>
      <button class="tool" aria-label="Длина дуги"><svg><use href="#darc"/></svg></button>
      <button class="tool" aria-label="Дуговой"><svg><use href="#arc"/></svg></button>
      <button class="tool" aria-label="Ординатный"><svg><use href="#dord"/></svg></button>
      <i class="rule"></i>
      <button class="tool" aria-label="Радиус"><svg><use href="#drad"/></svg></button>
      <button class="tool" aria-label="С изломом"><svg><use href="#djog"/></svg></button>
      <button class="tool" aria-label="Диаметр"><svg><use href="#ddia"/></svg></button>
      <button class="tool" aria-label="Угловой"><svg><use href="#dang"/></svg></button>
      <i class="rule"></i>
      <button class="tool" aria-label="Быстрый размер"><svg><use href="#qdim"/></svg></button>
      <button class="tool" aria-label="Базовый"><svg><use href="#dbase"/></svg></button>
      <button class="tool" aria-label="Размерная цепь"><svg><use href="#dcont"/></svg></button>
      <i class="rule"></i>
      <button class="tool" aria-label="Быстрая выноска"><svg><use href="#lead"/></svg></button>
      <button class="tool" aria-label="Допуск"><svg><use href="#tol"/></svg></button>
      <button class="tool" aria-label="Маркер центра"><svg><use href="#cmark"/></svg></button>
      <i class="rule"></i>
      <button class="tool" aria-label="Редактировать размер"><svg><use href="#dimA"/></svg></button>
      <button class="tool" aria-label="Редактировать текст"><svg><use href="#dimE"/></svg></button>
      <button class="tool" aria-label="Обновить размер"><svg><use href="#dimU"/></svg></button>
      <i class="rule"></i>
      <button class="tool" aria-label="Стили размеров"><svg><use href="#dstyle"/></svg></button>
      <button class="tool" aria-label="Сравнить"><svg><use href="#fade"/></svg></button>
      <i class="hgrip order"></i>
      <button class="tool" aria-label="На передний план"><svg><use href="#ord1"/></svg></button>
      <button class="tool" aria-label="На задний план"><svg><use href="#ord2"/></svg></button>
      <button class="tool" aria-label="Перед объектом"><svg><use href="#ord3"/></svg></button>
      <button class="tool" aria-label="За объектом"><svg><use href="#ord3"/></svg></button>
    </div>

    <aside class="side">
      <i class="hgrip"></i>
      <div class="screenmenu">
        <button>AutoCAD</button>
        <button>* * * *</button>
        <button class="spaced">Поверн:</button>
        <button class="spaced">Ссылка</button>
        <button class="spaced">3-Повор:</button>
        <button class="push">СРЕДСТВА</button>
        <button>ПРЕДМЕНЮ</button>
      </div>
    </aside>
  </main>

  <div class="command">
    <i class="grip"></i>
    <label class="cmdline"><span>Команда:</span><input type="text" aria-label="Командная строка"></label>
  </div>

  <footer class="status">
    <output class="coords">-43.1130,&nbsp; 402.0679, 0.0000</output>
    <button>ШАГ</button><button>СЕТКА</button><button>ОРТО</button><button class="on">ОТС-ПОЛЯР</button><button class="on">ПРИВЯЗКА</button><button class="on">ОТС-ОБЪЕКТ</button><button class="on">ДИН</button><button>ВЕС</button><button class="on">МОДЕЛЬ</button>
    <div class="tray"><svg><use href="#warn"/></svg><svg><use href="#tlock"/></svg></div>
    <button class="traymenu" aria-label="Меню строки состояния"></button>
    <svg class="sizer" viewBox="0 0 8 8"><path d="M8 0 0 8M8 3 3 8M8 6 6 8"/></svg>
  </footer>
</div>

<div class="taskbar">
  <button class="start"><svg><use href="#flag"/></svg>Пуск</button>
  <div class="quick">
    <button aria-label="Рабочий стол"><svg><use href="#ql1"/></svg></button>
    <button aria-label="Проводник"><svg><use href="#ql2"/></svg></button>
    <button aria-label="Плеер"><svg><use href="#ql3"/></svg></button>
    <button aria-label="Почта"><svg><use href="#ql4"/></svg></button>
    <button aria-label="Загрузки"><svg><use href="#ql5"/></svg></button>
    <button aria-label="Документы"><svg><use href="#ql6"/></svg></button>
    <button aria-label="Интернет"><svg><use href="#ql7"/></svg></button>
  </div>
  <button class="task active"><svg><use href="#app"/></svg>AutoCAD 2006 - [Ри...</button>
  <button class="task"><svg><use href="#paint"/></svg>повернуть2.JPG - Paint</button>
  <div class="systray">
    <span>«</span>
    <svg><use href="#net"/></svg><svg><use href="#updown"/></svg><svg><use href="#plug"/></svg>
    <span class="lang">Ru</span>
    <time>22:11</time>
  </div>
</div>
</body>
</html>
```
FILE: styles.css
```css
:root {
  --face: #aaeae0;
  --bar: #b2eee2;
  --light: #e2fffa;
  --mid: #78bdb4;
  --dark: #2e706b;
  --ink: #173f40;
  --field: #f6ffff;
}

* { box-sizing: border-box; }

body {
  margin: 0;
  height: 100vh;
  display: flex;
  flex-direction: column;
  overflow: hidden;
  background: #a2cef2;
  color: var(--ink);
  font: 7px/10px Roboto, "Liberation Sans", sans-serif;
}

button, select, input {
  margin: 0;
  padding: 0;
  border: 0;
  border-radius: 0;
  background: none;
  color: inherit;
  font: inherit;
}

button { flex: none; white-space: nowrap; }
svg { display: block; flex: none; width: 12px; height: 12px; }
i { display: block; flex: none; }
.sprite { position: absolute; width: 0; height: 0; }

.window {
  flex: 1;
  min-height: 0;
  display: flex;
  flex-direction: column;
  margin: 2px 2px 0 3px;
  border: 1px solid var(--light);
  border-right: 1px solid #3b758b;
  border-bottom: 2px solid #34707c;
  background: var(--face);
}
.window > * { flex: none; }

.titlebar {
  display: flex;
  align-items: center;
  height: 13px;
  background: linear-gradient(90deg, #0b2a9a, #0f48ac 40%, #1785cd 62%, #1fc4e2 88%, #27dbe7);
  color: #fff;
}
.titlebar .icon { margin-right: 1px; }
.title { flex: 1; margin: 0; font: bold 8px/13px Roboto, "Liberation Sans", sans-serif; }

.winbtns { display: flex; padding-right: 1px; }
.winbtns button, .vscroll button, .hscroll button {
  background: var(--face);
  border: 1px solid var(--light);
  border-right-color: #164a4a;
  border-bottom-color: #164a4a;
}
.winbtns button { width: 10px; height: 9px; padding: 0 1px; }
.winbtns button:last-child { margin-left: 1px; }
.winbtns svg { width: 6px; height: 7px; fill: none; stroke: #071d1f; stroke-width: 1.5; }

.menubar { display: flex; align-items: center; height: 12px; background: var(--bar); }
.menubar .icon { margin: 0 3px 0 2px; }
.menus { flex: 1; display: flex; gap: 7px; }

.toolrow { display: flex; height: 17px; margin-top: 1px; padding-left: 2px; background: var(--bar); border-top: 1px solid #94d3c9; }
.toolrow + .toolrow { margin-top: 0; height: 18px; }
.toolbar { display: flex; align-items: center; border-right: 1px solid var(--mid); border-top: 1px solid var(--light); }
.toolbar + .toolbar { border-left: 1px solid var(--light); margin-left: 2px; padding-left: 2px; }
.toolrow:nth-of-type(1) .toolbar:first-child { padding-right: 2px; }
.grow { flex: 1; min-width: 0; }
.grip { width: 3px; height: 13px; margin: 0 2px 0 1px; border: 1px solid var(--mid); border-top: 0; border-bottom: 0; background: var(--light); }
.sep { width: 1px; height: 14px; margin: 0 2px; background: #83c7bd; }
.tool { width: 14px; height: 14px; padding: 1px; }
.tool.wide { width: 18px; padding-left: 4px; }
.more { width: 8px; height: 12px; }
.more::before, .traymenu::before { content: ""; display: block; width: 0; margin: 0 auto; border: 2px solid transparent; border-top-color: #142d30; border-bottom: 0; }
.more.pale::before { border-top-color: #d9e2c4; }

.combo { position: relative; flex: none; height: 13px; border: 1px solid var(--dark); border-right-color: var(--light); border-bottom-color: var(--light); background: var(--field); }
.combo select { display: block; width: 100%; height: 11px; padding: 0 10px 0 3px; appearance: none; line-height: 11px; color: #1f3438; }
.combo::after {
  content: "";
  position: absolute;
  top: 0;
  right: 0;
  width: 8px;
  height: 11px;
  border: 1px solid var(--light);
  border-right-color: #164a4a;
  border-bottom-color: #164a4a;
  background: linear-gradient(#0e2d2e, #0e2d2e) center / 2px 2px no-repeat var(--face);
  pointer-events: none;
}
.combo .deco { position: absolute; top: 0; left: 2px; display: flex; gap: 1px; pointer-events: none; }
.combo .deco svg { width: 9px; height: 11px; }
.style { width: 62px; }
.rest { flex: 1; min-width: 0; }
.rest::after { display: none; }
.layer { width: 187px; }
.layer select { padding-left: 53px; }
.props { flex: none; }
.props .combo { margin-right: 4px; }
.color { width: 94px; }
.color select { padding-left: 13px; }
.ltype { width: 100px; }
.ltype select { padding-left: 44px; }
.weight { width: 78px; }
.weight select { padding-left: 28px; }
.combo .stroke { top: 5px; height: 1px; background: #1f3438; }
.ltype .stroke { width: 37px; }
.weight .stroke { width: 22px; }
.off { width: 75px; background: var(--face); border-color: #80c3bb; }
.off select { padding-left: 6px; color: #78bdb4; opacity: 1; }
.off::after { border-right-color: var(--mid); border-bottom-color: var(--mid); background-image: linear-gradient(#78bdb4, #78bdb4); }

.window > .work { flex: 1 1 0; display: flex; min-height: 0; }
.column { flex: none; width: 16px; display: flex; flex-direction: column; align-items: center; border-right: 1px solid #8ccdc3; border-left: 1px solid var(--light); background: var(--bar); }
.column:nth-child(2) { margin-right: 1px; }
.hgrip { align-self: stretch; height: 3px; margin: 1px 1px 2px; border: 1px solid var(--mid); border-left: 0; border-right: 0; background: var(--light); }
.stack { display: grid; grid-template-rows: repeat(20, 1fr); height: 275px; align-items: center; border-bottom: 1px solid #8ccdc3; }

.drawing { flex: 1; min-width: 0; display: grid; grid-template: minmax(0, 1fr) 11px / minmax(0, 1fr) 9px; }
.model { width: 100%; height: 100%; background: #0f0f0f; }
.cross, .shape, .ucs { fill: none; stroke-width: 1; }
.cross { stroke: #a7a7a7; }
.shape { stroke: #a9a9a9; }
.ucs { stroke: #bdbdbd; }
.axis { fill: #b4b4b4; font: 11px "Liberation Sans", sans-serif; }

.vscroll { display: flex; flex-direction: column; background: #c6f5ee; }
.vscroll button, .hscroll button { width: 9px; height: 9px; }
.vscroll svg, .hscroll svg { width: 7px; height: 7px; fill: #0b2526; }
.thumb { background: var(--face); border: 1px solid var(--light); border-right-color: #164a4a; border-bottom-color: #164a4a; }
.vscroll .thumb { height: 8px; }
.track { flex: 1; }

.tabs { grid-column: 1 / -1; display: flex; align-items: stretch; padding-left: 1px; background: var(--face); }
.tabnav { display: flex; }
.tabnav button { width: 12px; padding: 0 2px; border-right: 1px solid var(--mid); }
.tabnav svg { width: 8px; height: 8px; fill: #0b2526; }
.tab { position: relative; z-index: 0; height: 10px; margin-right: 2px; padding: 0 4px; line-height: 9px; }
.tab::before { content: ""; position: absolute; z-index: -1; inset: 0 1px; border: 1px solid var(--dark); border-top: 0; transform: skewX(-20deg); }
.tab.current { margin-right: 0; color: #f2f2f2; }
.tab.current::before { inset: 0 -1px; border: 0; background: #0f0f0f; clip-path: polygon(0 0, 100% 0, calc(100% - 3px) 100%, 4px 100%); transform: none; }
.hscroll { display: flex; width: 35%; margin-left: auto; padding-right: 9px; background: #c6f5ee; }
.hscroll .before { flex: 75; background: var(--bar); }
.hscroll .thumb { width: 8px; height: 10px; }
.hscroll .after { flex: 75; }

.dims { overflow: hidden; margin-left: 2px; border-left-color: var(--mid); }
.dims > * { flex: none; }
.rule { align-self: stretch; height: 1px; margin: 1px; background: #83c7bd; }
.order { height: 4px; margin: 3px 0; }

.side { flex: none; width: 58px; display: flex; flex-direction: column; }
.screenmenu { display: flex; flex-direction: column; align-items: flex-start; height: 267px; padding-left: 1px; border-right: 1px solid var(--mid); border-bottom: 1px solid var(--mid); }
.screenmenu button { height: 9px; line-height: 9px; }
.screenmenu .spaced { margin-top: 10px; }
.screenmenu .spaced:nth-child(3) { margin-top: 2px; }
.screenmenu .push { margin-top: auto; }
.screenmenu button:last-child { margin-bottom: 23px; }

.command { display: flex; height: 20px; margin-top: 3px; padding: 1px 15px 1px 2px; border-top: 2px solid #4f918e; }
.command .grip { height: 12px; align-self: center; margin-right: 4px; }
.cmdline { flex: 1; display: flex; align-items: flex-end; padding-left: 1px; border-top: 2px solid #6e9996; border-left: 1px solid var(--dark); background: var(--field); font: 8px/10px "Liberation Mono", monospace; }
.cmdline input { flex: 1; min-width: 0; height: 10px; outline: 0; }

.status { display: flex; align-items: center; gap: 2px; height: 16px; padding: 0 1px 0 3px; }
.status button { height: 13px; padding: 0 1px; border: 1px solid transparent; }
.status .on { border-color: var(--dark) var(--light) var(--light) var(--dark); }
.coords { flex: none; width: 149px; height: 13px; padding: 1px 1px; border: 1px solid var(--mid); border-right-color: var(--light); border-bottom-color: var(--light); }
.tray { display: flex; margin-left: auto; padding: 0 2px; border: 1px solid var(--mid); border-right-color: var(--light); border-bottom-color: var(--light); }
.tray svg { height: 11px; }
.status .traymenu { width: 10px; }
.sizer { width: 7px; height: 8px; stroke: var(--mid); }

.taskbar { flex: none; display: flex; align-items: center; height: 18px; padding: 0 3px; border-top: 1px solid var(--light); background: var(--face); }
.taskbar button { display: flex; align-items: center; }
.taskbar .start { width: 31px; height: 14px; border: 1px solid var(--light); border-right-color: var(--dark); border-bottom-color: var(--dark); font-weight: bold; font-size: 8px; }
.taskbar .start svg { width: 9px; height: 10px; margin-right: 1px; }
.quick { flex: none; display: flex; margin-left: 4px; padding-left: 4px; border-left: 1px solid var(--mid); }
.quick button { width: 14px; margin-right: 1px; }
.quick button:nth-child(even) { margin-right: 0; }
.task { width: 100px; height: 14px; margin-left: 3px; padding-left: 3px; gap: 3px; border: 1px solid var(--light); border-right-color: var(--dark); border-bottom-color: var(--dark); }
.task svg { width: 10px; height: 11px; }
.task.active { margin-left: 24px; border-color: var(--dark) var(--light) var(--light) var(--dark); background: #d0f8f1; font-weight: bold; font-size: 8px; }
.systray { display: flex; align-items: center; gap: 4px; height: 14px; margin-left: auto; padding: 0 2px; border: 1px solid var(--mid); border-right-color: var(--light); border-bottom-color: var(--light); }
.systray svg { width: 10px; height: 10px; }
.systray span:first-child { font-weight: bold; }
.lang { width: 11px; height: 10px; background: #a3adae; color: #e3f3f3; text-align: center; }
```
